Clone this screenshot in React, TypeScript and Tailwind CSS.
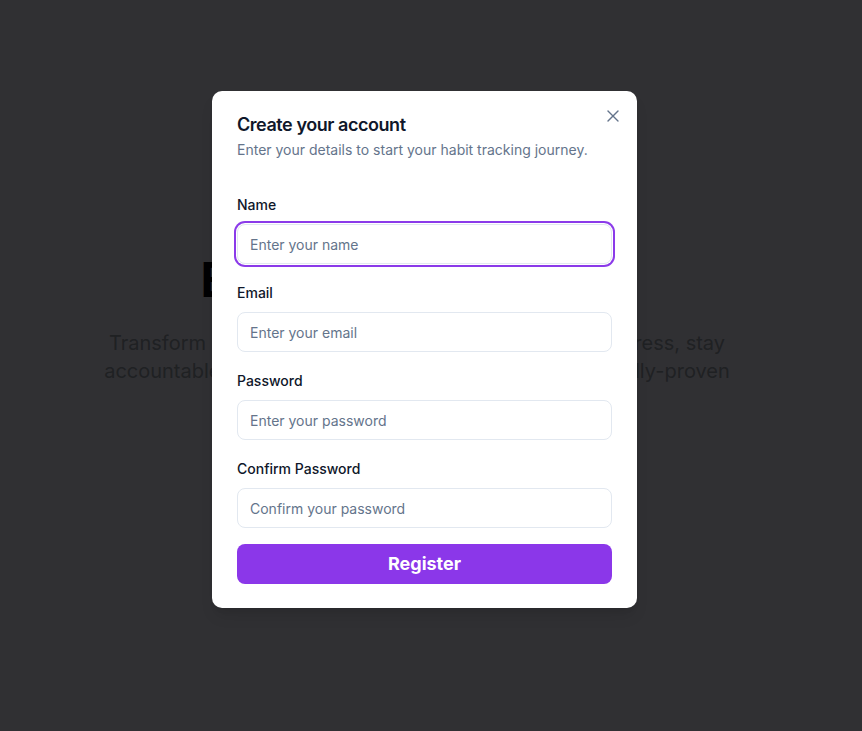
import React from "react";

const font = { fontFamily: "Inter, 'Noto Sans', sans-serif" };

function Field({ label, placeholder, focused, type = "text" }: { label: string; placeholder: string; focused?: boolean; type?: string }) {
  return (
    <div className="flex flex-col">
      <label className="text-sm font-medium leading-none text-[#0f172a] mb-3">{label}</label>
      <input
        type={type}
        placeholder={placeholder}
        className={
          "h-10 w-full rounded-lg border border-[#e2e8f0] bg-white px-3 text-sm text-[#0f172a] placeholder:text-[#64748b] outline-none " +
          (focused ? "ring-2 ring-[#8b3ae9] ring-offset-1 ring-offset-white" : "")
        }
      />
    </div>
  );
}

export default function App() {
  return (
    <div className="relative h-[731px] w-full overflow-hidden bg-[#f0f0ff]" style={font}>
      {/* background page */}
      <div className="flex flex-col items-center pt-[252px] pr-[28px]">
        <h1 className="text-5xl font-bold leading-[56px] text-[#050510]">Build Better Habits</h1>
        <p className="mt-[21px] text-center text-xl leading-7 text-[#9ca3af]">
          Transform your life with a habit tracker. Track your progress, stay
          <br />
          accountable, and achieve your goals with our scientifically-proven
        </p>
      </div>
      {/* overlay */}
      <div className="absolute inset-0 bg-black/80" />
      {/* dialog */}
      <div className="absolute left-[212px] top-[91px] w-[425px] rounded-[10px] bg-white px-[25px] pt-[25px] pb-6 shadow-lg">
        <button className="absolute right-[14px] top-[15px] text-[#64748b]">
          <svg width="20" height="20" viewBox="0 0 24 24" fill="none" stroke="currentColor" strokeWidth="1.6" strokeLinecap="round" strokeLinejoin="round">
            <path d="M18 6 6 18" />
            <path d="m6 6 12 12" />
          </svg>
        </button>
        <div className="flex flex-col gap-1.5">
          <h2 className="text-lg font-semibold leading-none text-[#0f172a] tracking-tight">Create your account</h2>
          <p className="text-sm leading-5 text-[#64748b]">Enter your details to start your habit tracking journey.</p>
        </div>
        <form className="mt-[38px] flex flex-col gap-[22px]" onSubmit={(e) => e.preventDefault()}>
          <Field label="Name" placeholder="Enter your name" focused />
          <Field label="Email" placeholder="Enter your email" type="email" />
          <Field label="Password" placeholder="Enter your password" type="password" />
          <Field label="Confirm Password" placeholder="Confirm your password" type="password" />
        </form>
        <button className="mt-4 h-10 w-full rounded-lg bg-[#8b37e9] text-lg font-bold text-white">Register</button>
      </div>
    </div>
  );
}
